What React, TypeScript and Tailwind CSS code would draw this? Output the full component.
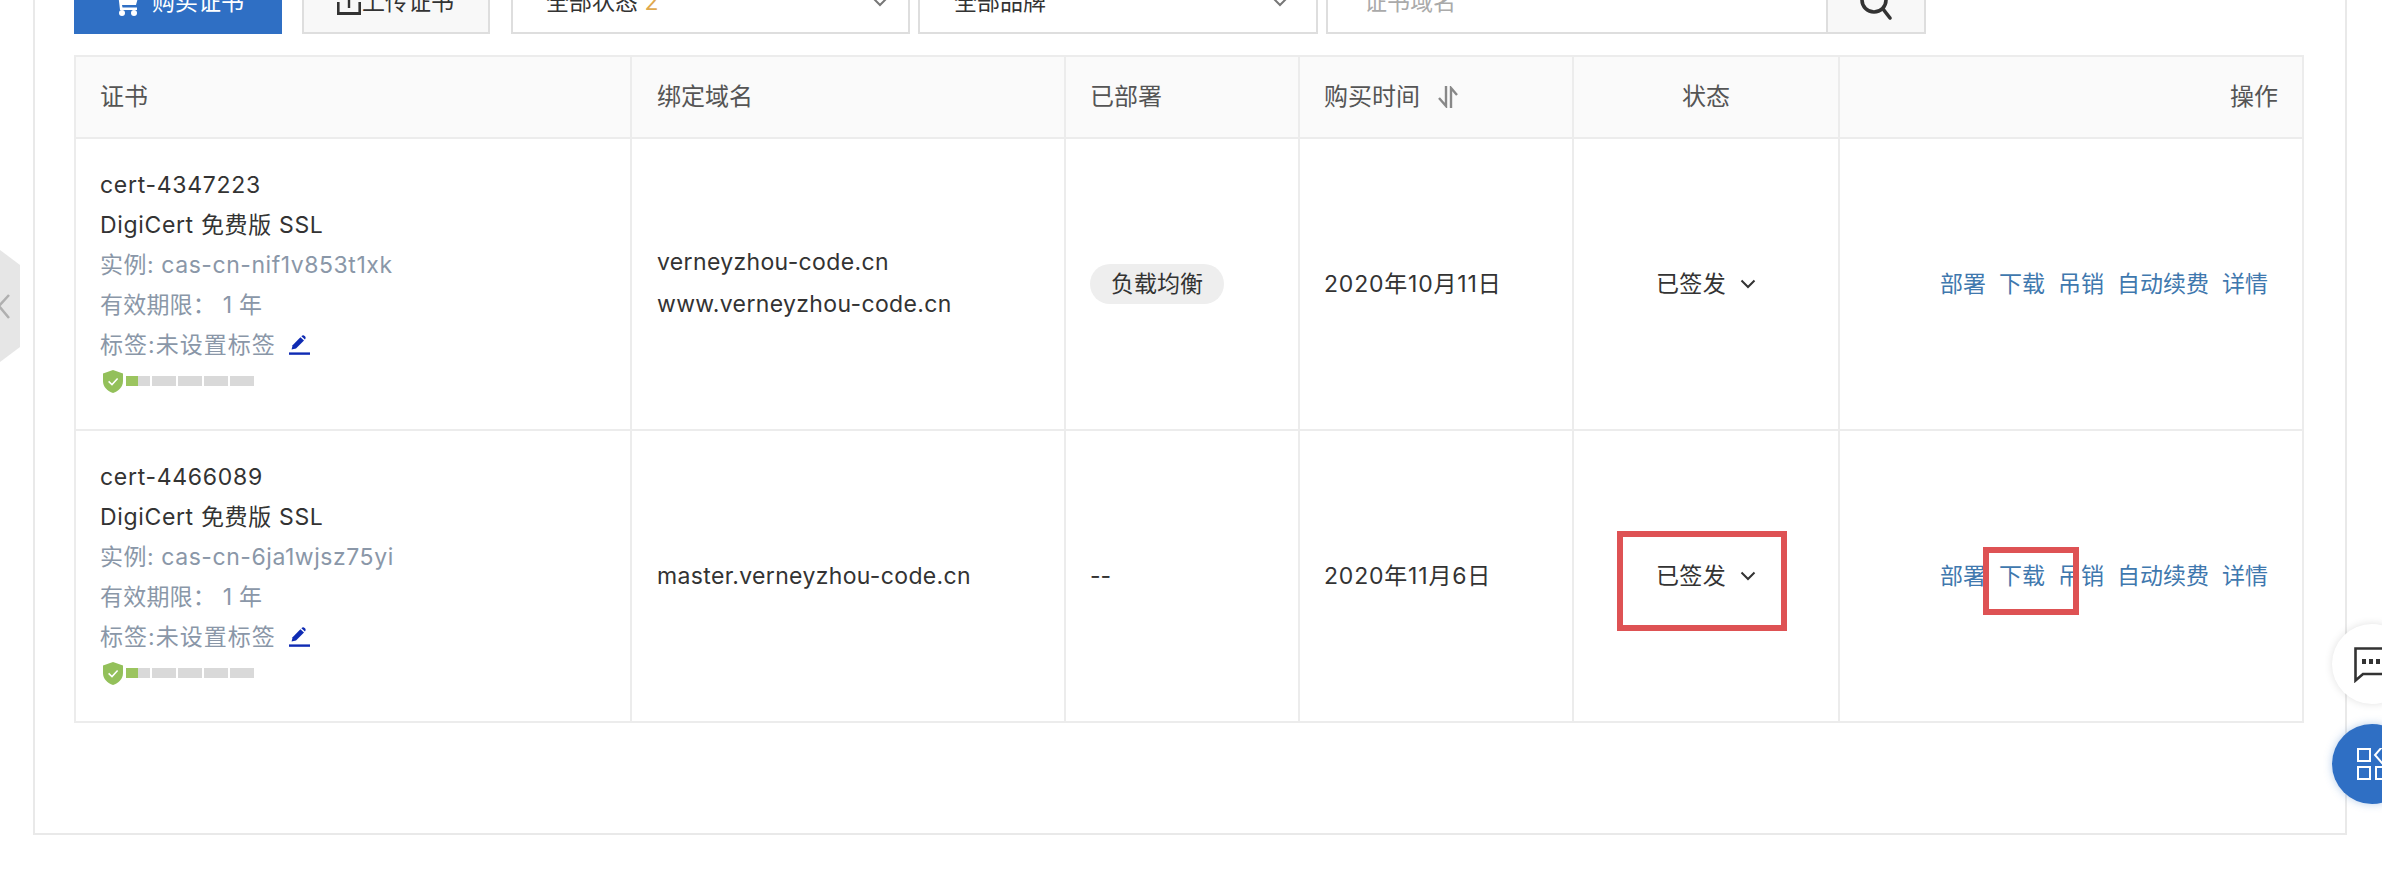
import React from "react";

const columns = [556, 434, 234, 274, 266, 464];

function Pencil() {
  return (
    <svg width="21" height="20" viewBox="0 0 21 20" className="inline-block">
      <rect x="0" y="17.4" width="21" height="2.4" fill="#0f2bb3" />
      <path d="M2.6 14.6 L3.6 10.2 L11.4 2.2 L15 5.6 L7 13.6 Z" fill="#0f2bb3" />
      <path d="M12.4 1.2 C13.4 0.2 14.6 0 15.6 0.9 L16 1.3 C16.9 2.3 16.8 3.5 15.9 4.5 Z" fill="#0f2bb3" />
    </svg>
  );
}

function Security() {
  return (
    <div className="flex items-center h-[22px] mt-[5px] ml-[3px]">
      <svg width="20" height="23" viewBox="0 0 20 23" className="mr-[3px]">
        <path d="M10 0 L20 3.4 V11 C20 17 15.5 21 10 23 C4.5 21 0 17 0 11 V3.4 Z" fill="#93c05a" />
        <path d="M5.6 11.4 L9 14.6 L14.6 8.6" fill="none" stroke="#fff" strokeWidth="1.5" />
      </svg>
      <div className="flex gap-[2px]">
        <div className="w-[24px] h-[10px] bg-[#d9d9d9]">
          <div className="w-[12px] h-[10px] bg-[#9bc45f]" />
        </div>
        <div className="w-[24px] h-[10px] bg-[#d9d9d9]" />
        <div className="w-[24px] h-[10px] bg-[#d9d9d9]" />
        <div className="w-[24px] h-[10px] bg-[#d9d9d9]" />
        <div className="w-[24px] h-[10px] bg-[#d9d9d9]" />
      </div>
    </div>
  );
}

function Chevron({ color = "#333" }: { color?: string }) {
  return (
    <svg width="16" height="10" viewBox="0 0 16 10" className="inline-block">
      <path d="M1.5 1.5 L8 8 L14.5 1.5" fill="none" stroke={color} strokeWidth="2" />
    </svg>
  );
}

function Cert({ id, instance }: { id: string; instance: string }) {
  return (
    <td className="border-2 border-[#ececec] pl-[24px] align-top pt-[26px]">
      <div className="leading-[40px] text-[#333] tracking-[0.7px]">{id}</div>
      <div className="leading-[40px] text-[#333] tracking-[0.65px]">DigiCert 免费版 SSL</div>
      <div className="leading-[40px] text-[#8a97a8] tracking-[0.55px]">实例: {instance}</div>
      <div className="leading-[40px] text-[#8a97a8] tracking-[0.2px]">有效期限： 1 年</div>
      <div className="leading-[40px] text-[#8a97a8] flex items-center gap-[13px] tracking-[1px]">
        <span>标签:未设置标签</span>
        <Pencil />
      </div>
      <Security />
    </td>
  );
}

function Actions() {
  return (
    <td className="border-2 border-[#ececec] pr-[34px] text-right">
      <div className="flex justify-end gap-[13px] text-[#3f78ae]">
        <span>部署</span>
        <span>下载</span>
        <span>吊销</span>
        <span>自动续费</span>
        <span>详情</span>
      </div>
    </td>
  );
}

function Status() {
  return (
    <td className="border-2 border-[#ececec] text-center text-[#333]">
      <span className="inline-flex items-center gap-[14px] tracking-[0.3px]">
        已签发
        <Chevron />
      </span>
    </td>
  );
}

export default function App() {
  return (
    <div
      className="relative h-[870px] w-[2382px] overflow-hidden bg-white text-[23px]"
      style={{ fontFamily: '"Inter", "Noto Sans CJK SC", sans-serif' }}
    >
      <div className="ml-[33px] mt-[-40px] h-[875px] w-[2314px] border-2 border-[#e9e9e9] pl-[39px] pt-[8px]">
        <div className="flex h-[64px] mb-[21px]">
          <div className="flex items-center w-[208px] pl-[41px] gap-[13px] bg-[#2f6fc4] text-white">
            <svg width="24" height="28" viewBox="0 0 24 28">
              <path d="M0 2 H5 L6 6 H24 L21 17 H7 L7.5 19.5 H22 V22 H5 L3 4.5 H0 Z" fill="#fff" />
              <circle cx="7" cy="25" r="3" fill="#fff" />
              <circle cx="19" cy="25" r="3" fill="#fff" />
            </svg>
            <span>购买证书</span>
          </div>
          <div className="flex items-center w-[188px] ml-[20px] pl-[33px] gap-[1px] bg-[#f8f8f8] border-2 border-[#dedede] text-[#333]">
            <svg width="24" height="26" viewBox="0 0 24 26">
              <path d="M12 0 L17 6 H13.2 V19 H10.8 V6 H7 Z M0 13 H2.6 V23 H21.4 V13 H24 V26 H0 Z" fill="#333" />
            </svg>
            <span>上传证书</span>
          </div>
          <div className="flex items-center justify-between w-[399px] ml-[21px] pl-[33px] pr-[20px] border-2 border-[#dedede] text-[#333]">
            <span>
              全部状态 <span className="text-[#dfa94f]">2</span>
            </span>
            <Chevron color="#777" />
          </div>
          <div className="flex items-center justify-between w-[400px] ml-[8px] pl-[34px] pr-[28px] border-2 border-[#dedede] text-[#333]">
            <span>全部品牌</span>
            <Chevron color="#777" />
          </div>
          <div className="flex w-[600px] ml-[8px] border-2 border-[#dedede]">
            <div className="flex items-center flex-1 pl-[36px] text-[#aaaaaa]">证书域名</div>
            <div className="flex items-center justify-center w-[98px] bg-[#f8f8f8] border-l-2 border-[#dedede]">
              <svg width="34" height="36" viewBox="0 0 34 36" className="mt-[2px]">
                <circle cx="15" cy="15" r="12" fill="none" stroke="#333" strokeWidth="3.6" />
                <path d="M24 24 L31 33" fill="none" stroke="#333" strokeWidth="3.6" strokeLinecap="round" />
              </svg>
            </div>
          </div>
        </div>

        <table className="w-[2228px] table-fixed border-collapse">
          <colgroup>
            {columns.map((w, i) => (
              <col key={i} style={{ width: w }} />
            ))}
          </colgroup>
          <thead>
            <tr className="h-[82px] bg-[#fafafa] text-[#555] text-[24px]">
              <th className="border-2 border-[#ececec] pl-[24px] text-left font-normal">证书</th>
              <th className="border-2 border-[#ececec] pl-[25px] text-left font-normal">绑定域名</th>
              <th className="border-2 border-[#ececec] pl-[24px] text-left font-normal">已部署</th>
              <th className="border-2 border-[#ececec] pl-[24px] text-left font-normal">
                <span className="inline-flex items-center gap-[18px]">
                  购买时间
                  <svg width="20" height="22" viewBox="0 0 20 22">
                    <path d="M8 0 V20 L1 12" fill="none" stroke="#888" strokeWidth="2.4" />
                    <path d="M13 22 V2 L19 9" fill="none" stroke="#888" strokeWidth="2.4" />
                  </svg>
                </span>
              </th>
              <th className="border-2 border-[#ececec] text-center font-normal">状态</th>
              <th className="border-2 border-[#ececec] pr-[24px] text-right font-normal">操作</th>
            </tr>
          </thead>
          <tbody>
            <tr className="h-[292px]">
              <Cert id="cert-4347223" instance="cas-cn-nif1v853t1xk" />
              <td className="border-2 border-[#ececec] pl-[25px] text-[#333] tracking-[0.35px]">
                <div className="leading-[40px] mb-[2px] mt-[-2px]">verneyzhou-code.cn</div>
                <div className="leading-[40px]">www.verneyzhou-code.cn</div>
              </td>
              <td className="border-2 border-[#ececec] pl-[24px]">
                <span className="inline-flex items-center h-[40px] px-[21px] rounded-[20px] bg-[#eeeeee] text-[#333]">
                  负载均衡
                </span>
              </td>
              <td className="border-2 border-[#ececec] pl-[24px] text-[#333] tracking-[0.8px]">2020年10月11日</td>
              <Status />
              <Actions />
            </tr>
            <tr className="h-[292px]">
              <Cert id="cert-4466089" instance="cas-cn-6ja1wjsz75yi" />
              <td className="border-2 border-[#ececec] pl-[25px] text-[#333] tracking-[0.35px]">master.verneyzhou-code.cn</td>
              <td className="border-2 border-[#ececec] pl-[24px] text-[#333]">--</td>
              <td className="border-2 border-[#ececec] pl-[24px] text-[#333] tracking-[0.8px]">2020年11月6日</td>
              <Status />
              <Actions />
            </tr>
          </tbody>
        </table>
      </div>

      <svg width="20" height="112" viewBox="0 0 20 112" className="absolute left-0 top-[250px]">
        <path d="M0 0 L20 15 V97 L0 112 Z" fill="#e6e6e6" />
        <path d="M9 45 L-1 56 L9 68" fill="none" stroke="#b0b0b0" strokeWidth="2.5" />
      </svg>

      <div className="absolute left-[1617px] top-[531px] w-[170px] h-[100px] border-[6px] border-[#de5254]" />
      <div className="absolute left-[1983px] top-[547px] w-[96px] h-[68px] border-[6px] border-[#de5254]" />

      <div className="absolute left-[2332px] top-[624px] w-[80px] h-[80px] rounded-full bg-white shadow-[0_0_8px_rgba(0,0,0,0.12)] pl-[22px] pt-[23px]">
        <svg width="38" height="36" viewBox="0 0 38 36">
          <path d="M1.5 1.5 H36.5 V27 H9 L1.5 33.5 Z" fill="none" stroke="#333" strokeWidth="2.6" />
          <rect x="8" y="12" width="4" height="5" fill="#333" />
          <rect x="15" y="12" width="4" height="5" fill="#333" />
          <rect x="22" y="12" width="4" height="5" fill="#333" />
        </svg>
      </div>
      <div className="absolute left-[2332px] top-[724px] w-[80px] h-[80px] rounded-full bg-[#2f6fc4] shadow-[0_0_8px_rgba(47,111,196,0.35)] pl-[25px] pt-[24px]">
        <svg width="34" height="32" viewBox="0 0 34 32">
          <rect x="1" y="1" width="12" height="12" fill="none" stroke="#fff" strokeWidth="2" />
          <rect x="1" y="19" width="12" height="12" fill="none" stroke="#fff" strokeWidth="2" />
          <rect x="19" y="19" width="12" height="12" fill="none" stroke="#fff" strokeWidth="2" />
          <path d="M25 -1 L32 7 L25 15 L18 7 Z" fill="none" stroke="#fff" strokeWidth="2" />
        </svg>
      </div>
    </div>
  );
}
